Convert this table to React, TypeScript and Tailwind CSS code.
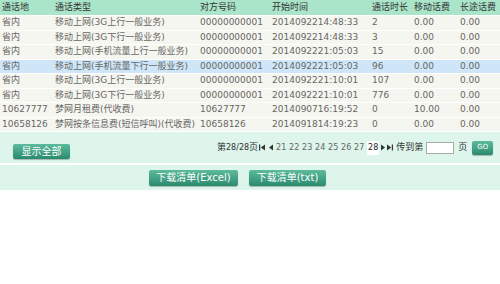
import React from "react";

const rows = [
  ["省内", "移动上网(3G上行一般业务)", "00000000001", "2014092214:48:33", "2", "0.00", "0.00"],
  ["省内", "移动上网(3G下行一般业务)", "00000000001", "2014092214:48:33", "3", "0.00", "0.00"],
  ["省内", "移动上网(手机流量上行一般业务)", "00000000001", "2014092221:05:03", "15", "0.00", "0.00"],
  ["省内", "移动上网(手机流量下行一般业务)", "00000000001", "2014092221:05:03", "96", "0.00", "0.00"],
  ["省内", "移动上网(3G上行一般业务)", "00000000001", "2014092221:10:01", "107", "0.00", "0.00"],
  ["省内", "移动上网(3G下行一般业务)", "00000000001", "2014092221:10:01", "776", "0.00", "0.00"],
  ["10627777", "梦网月租费(代收费)", "10627777", "2014090716:19:52", "0", "10.00", "0.00"],
  ["10658126", "梦网按条信息费(短信呼叫)(代收费)", "10658126", "2014091814:19:23", "0", "0.00", "0.00"],
];

const headers = ["通话地", "通话类型", "对方号码", "开始时间", "通话时长", "移动话费", "长途话费"];

const grid = "grid grid-cols-[53px_145px_72px_100px_42px_46px_42px]";

function First() {
  return (
    <svg width="6" height="7" viewBox="0 0 6 7" className="block">
      <rect x="0" y="0.5" width="1.2" height="6" fill="#333" />
      <path d="M6 0.5 L1.8 3.5 L6 6.5 Z" fill="#333" />
    </svg>
  );
}
function Prev() {
  return (
    <svg width="4" height="7" viewBox="0 0 4 7" className="block">
      <path d="M4 0.5 L0 3.5 L4 6.5 Z" fill="#333" />
    </svg>
  );
}
function Next() {
  return (
    <svg width="4" height="7" viewBox="0 0 4 7" className="block">
      <path d="M0 0.5 L4 3.5 L0 6.5 Z" fill="#333" />
    </svg>
  );
}
function Last() {
  return (
    <svg width="6" height="7" viewBox="0 0 6 7" className="block">
      <path d="M0 0.5 L4.2 3.5 L0 6.5 Z" fill="#333" />
      <rect x="4.8" y="0.5" width="1.2" height="6" fill="#333" />
    </svg>
  );
}

const btn =
  "flex shrink-0 items-center justify-center whitespace-nowrap rounded-[2px] bg-gradient-to-b from-[#5dbb9d] to-[#2a8a6e] text-white shadow-[0_1px_1px_rgba(0,0,0,0.25)]";

export default function App() {
  return (
    <div
      className="w-[500px] h-[284px] bg-white text-[9px] leading-none"
      style={{ fontFamily: '"DejaVu Sans", "Noto Sans CJK SC", sans-serif' }}
    >
      <div className={`${grid} h-[15px] items-center bg-[#aae4c9] text-[#333]`}>
        {headers.map((h) => (
          <div key={h} className="pl-[2px] whitespace-nowrap">{h}</div>
        ))}
      </div>
      {rows.map((r, i) => (
        <div
          key={i}
          className={`${grid} h-[14.5px] items-center border-t border-white text-[#666] ${
            i === 3 ? "bg-[#cfe6f8]" : "bg-[#f6f6f0]"
          }`}
        >
          {r.map((c, j) => (
            <div key={j} className="pl-[2px] whitespace-nowrap">{c}</div>
          ))}
        </div>
      ))}
      <div className="flex h-[32px] items-center bg-[#ddf5eb] border-t border-white whitespace-nowrap">
        <div className="pl-[13px] shrink-0 self-start mt-[12px]">
          <div className={`${btn} w-[57px] h-[15px] text-[10px]`}>显示全部</div>
        </div>
        <div className="ml-[147px] flex shrink-0 items-center text-[#333] whitespace-nowrap">
          <span className="text-[9px]">
            第<span className="text-[8px]">28/28</span>页
          </span>
          <span className="ml-[1px]"><First /></span>
          <span className="ml-[4px]"><Prev /></span>
          <div className="ml-[3px] flex items-center text-[8px] text-[#666]">
            {["21", "22", "23", "24", "25", "26", "27"].map((n) => (
              <span key={n} className="w-[13px]">{n}</span>
            ))}
            <span className="px-[1px] py-[3px] bg-white text-[#222]">28</span>
          </div>
          <span className="ml-[2px]"><Next /></span>
          <span className="ml-[2px]"><Last /></span>
          <span className="ml-[3px] text-[9px]">传到第</span>
          <div className="ml-[3px] w-[28px] h-[12px] shrink-0 bg-white border border-[#aaa]" />
          <span className="ml-[4px] text-[9px]">页</span>
          <div className={`${btn} ml-[5px] w-[21px] h-[14px] text-[7px]`}>GO</div>
        </div>
      </div>
      <div className="flex h-[27px] items-center bg-[#ddf5eb] border-t-2 border-white pl-[149px] gap-[11px]">
        <div className={`${btn} w-[89px] h-[16px] text-[10px]`}>下载清单(Excel)</div>
        <div className={`${btn} w-[77px] h-[16px] text-[10px]`}>下载清单(txt)</div>
      </div>
    </div>
  );
}
